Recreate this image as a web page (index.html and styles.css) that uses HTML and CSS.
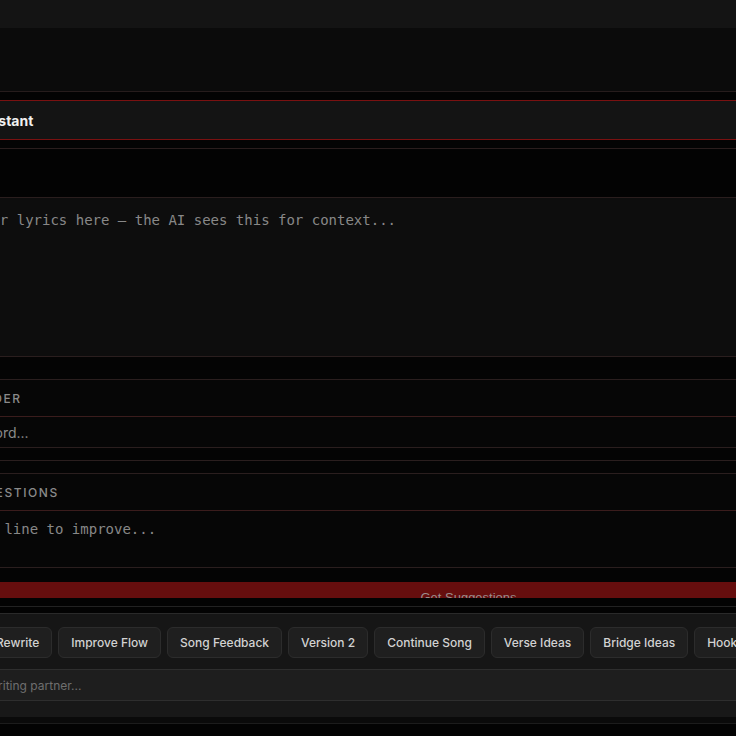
FILE: index.html
```html
<!DOCTYPE html>
<html lang="en">
<head>
<meta charset="utf-8">
<title>Lyric Assistant</title>
<link rel="stylesheet" href="styles.css">
</head>
<body>
<div class="app">
  <div class="topbar"></div>
  <div class="subbar"></div>
  <div class="panel">
    <div class="panel-head"><h2 class="panel-title">Lyric Assistant</h2></div>
    <div class="tabs"></div>
    <div class="lyrics">Paste your lyrics here — the AI sees this for context...</div>
    <section class="tool">
      <div class="tool-label">Rhyme Finder</div>
      <div class="tool-input">Enter a word...</div>
    </section>
    <div class="results"></div>
    <section class="tool tool-last">
      <div class="tool-label">Line Suggestions</div>
      <div class="tool-area">Enter a line to improve...</div>
    </section>
    <div class="btn-clip"><button class="primary-btn">Get Suggestions</button></div>
  </div>
  <div class="chat">
    <div class="quick-row">
      <button class="chip">Rewrite</button>
      <button class="chip">Improve Flow</button>
      <button class="chip">Song Feedback</button>
      <button class="chip">Version 2</button>
      <button class="chip">Continue Song</button>
      <button class="chip">Verse Ideas</button>
      <button class="chip">Bridge Ideas</button>
      <button class="chip">Hook Ideas</button>
      <button class="chip">Chorus Ideas</button>
    </div>
    <div class="chat-input">Ask your songwriting partner...</div>
    <div class="chat-foot"></div>
  </div>
</div>
</body>
</html>
```
FILE: styles.css
```css
html, body {
  margin: 0;
  padding: 0;
  overflow: hidden;
  background: #030303;
  height: 736px;
}
* { box-sizing: content-box; }
.app {
  margin-left: -140px;
  width: 1217px;
  display: flex;
  flex-direction: column;
  font-family: Inter, "Noto Sans", sans-serif;
}
.topbar { height: 28px; background: #141414; }
.subbar { height: 63px; background: #0b0b0b; border-bottom: 1px solid #261c1c; }
.panel {
  margin-top: 8px;
  background: #040404;
  display: flex;
  flex-direction: column;
}
.panel-head {
  height: 38px;
  background: #141414;
  border-top: 1px solid #7a1111;
  border-bottom: 1px solid #7a1111;
  display: flex;
  align-items: center;
  padding-left: 72px;
}
.panel-title {
  margin: 0;
  font-size: 14px;
  font-weight: 700;
  color: #f0f0f0;
}
.tabs {
  margin-top: 8px;
  height: 48px;
  background: #030303;
  border-top: 1px solid #2a1e1e;
  border-bottom: 1px solid #2a1e1e;
}
.lyrics {
  height: 146px;
  padding: 12px 0 0 64px;
  background: #0d0d0d;
  border-bottom: 1px solid #2a1e1e;
  font-family: "DejaVu Sans Mono", monospace;
  font-size: 14px;
  line-height: 20px;
  color: #888888;
}
.tool {
  margin-top: 22px;
  background: #060606;
  border-top: 1px solid #2a1e1e;
  border-bottom: 1px solid #2a1e1e;
}
.tool-label {
  height: 36px;
  display: flex;
  align-items: center;
  padding-left: 53px;
  font-size: 12px;
  font-weight: 500;
  letter-spacing: 1.6px;
  text-transform: uppercase;
  color: #8a8a8a;
  border-bottom: 1px solid #3a1c1c;
}
.tool-last .tool-label { padding-left: 57px; }
.tool-input {
  height: 30px;
  display: flex;
  align-items: center;
  padding-left: 73px;
  font-size: 14px;
  color: #8a8a8a;
}
.results {
  margin-top: 12px;
  border-top: 1px solid #2a1e1e;
}
.tool-last { margin-top: 12px; }
.tool-area {
  height: 48px;
  padding: 8px 0 0 77px;
  font-family: "DejaVu Sans Mono", monospace;
  font-size: 14px;
  line-height: 20px;
  color: #888888;
}
.btn-clip {
  margin-top: 14px;
  height: 16px;
  overflow: hidden;
}
.primary-btn {
  display: block;
  width: 100%;
  margin: 0;
  padding: 8px 0 16px;
  border: 0;
  background: #660e0e;
  color: #9a8c8c;
  font-family: "Liberation Sans", Arial, sans-serif;
  font-size: 13px;
  line-height: 16px;
  text-align: center;
}
.chat {
  margin-top: 8px;
  border-top: 1px solid #222222;
  display: flex;
  flex-direction: column;
}
.quick-row {
  margin-top: 6px;
  background: #161616;
  border-top: 1px solid #2a2a2a;
  display: flex;
  align-items: flex-start;
  gap: 6px;
  padding: 13px 0 0 123px;
  box-sizing: border-box;
  height: 56px;
  overflow: hidden;
}
.chip {
  flex: none;
  height: 31px;
  box-sizing: border-box;
  padding: 0 12px;
  background: #1f1f1f;
  border: 1px solid #2c2c2c;
  border-radius: 6px;
  color: #d2d2d2;
  font-family: Inter, "Noto Sans", sans-serif;
  font-size: 12px;
  font-weight: 500;
}
.chat-input {
  height: 30px;
  background: #1e1e1e;
  border-top: 1px solid #2e2e2e;
  border-bottom: 1px solid #2e2e2e;
  display: flex;
  align-items: center;
  padding-left: 47px;
  font-size: 12px;
  color: #6e6e6e;
}
.chat-foot {
  height: 16px;
  background: #181818;
  border-bottom: 6px solid #0a0a0a;
  box-shadow: 0 1px 0 #1c1c1c;
}
```
